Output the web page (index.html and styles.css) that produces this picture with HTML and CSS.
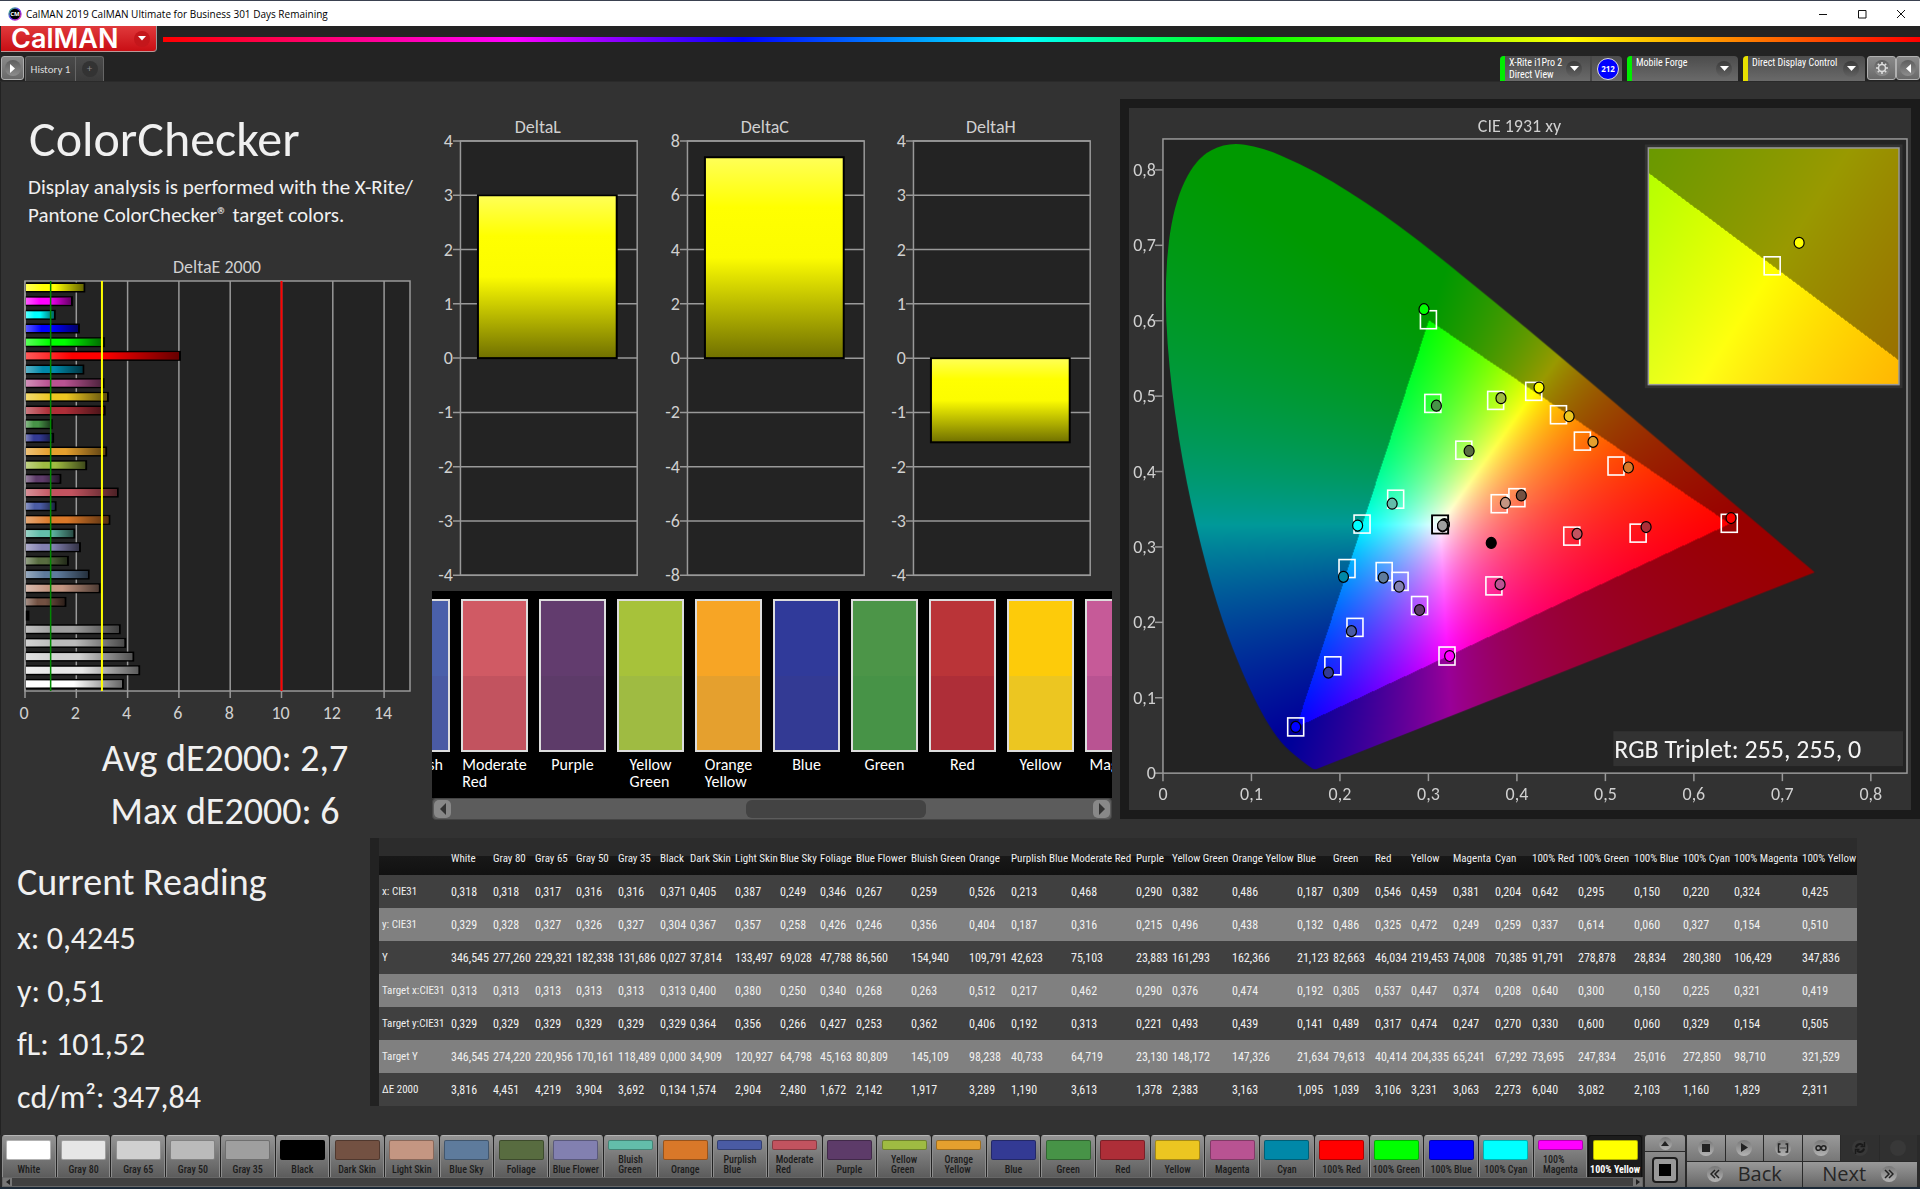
FILE: index.html
```html
<!DOCTYPE html>
<html lang="en">
<head>
<meta charset="utf-8">
<title>CalMAN 2019 CalMAN Ultimate for Business</title>
<link rel="stylesheet" href="styles.css">
</head>
<body>
<header class="titlebar">
  <svg class="app-icon" width="14" height="14" viewBox="0 0 14 14" aria-hidden="true">
    <defs><linearGradient id="ring" x1="0" y1="0" x2="1" y2="1"><stop offset="0" stop-color="#3c6"/><stop offset=".5" stop-color="#63f"/><stop offset="1" stop-color="#e3a"/></linearGradient></defs>
    <circle cx="7" cy="7" r="6" fill="#000" stroke="url(#ring)" stroke-width="1.4"/>
    <text x="7" y="9" text-anchor="middle" class="app-icon-text">CM</text>
  </svg>
  <span class="titlebar-text">CalMAN 2019 CalMAN Ultimate for Business 301 Days Remaining</span>
  <div class="window-buttons">
    <button aria-label="Minimize"><svg width="10" height="10"><path d="M1 5.500h8" stroke="#111"/></svg></button>
    <button aria-label="Maximize"><svg width="10" height="10"><path d="M1.500 1.500h7.500v7.500h-7.500z" fill="none" stroke="#111"/></svg></button>
    <button aria-label="Close"><svg width="10" height="10"><path d="M1 1l8 8M9 1l-8 8" stroke="#111"/></svg></button>
  </div>
</header>

<div class="brandbar">
  <button class="logo">CalMAN <span class="knob knob-red"><svg width="8" height="5"><path d="M0 0h8l-4 4.500z" fill="#fff"/></svg></span></button>
  <div class="spectrum"></div>
</div>

<nav class="tabbar">
  <button class="square-btn play-btn" aria-label="Expand"><span class="knob"><svg width="5" height="9"><path d="M0 0l5 4.500-5 4.500z" fill="#fff"/></svg></span></button>
  <button class="tab">History 1</button>
  <button class="tab tab-add" aria-label="Add tab"><span class="knob knob-dark">+</span></button>
  <div class="devices">
    <button class="device device-meter"><i class="strip strip-green"></i><span class="device-name">X-Rite i1Pro 2<br>Direct View</span><span class="knob knob-dark"><svg width="9" height="5"><path d="M0 0h9l-4.500 5z" fill="#fff"/></svg></span><span class="badge-cell"><span class="badge">212</span></span></button>
    <button class="device device-source"><i class="strip strip-green"></i><span class="device-name">Mobile Forge</span><span class="knob knob-dark"><svg width="9" height="5"><path d="M0 0h9l-4.500 5z" fill="#fff"/></svg></span></button>
    <button class="device device-display"><i class="strip strip-yellow"></i><span class="device-name">Direct Display Control</span><span class="knob knob-dark"><svg width="9" height="5"><path d="M0 0h9l-4.500 5z" fill="#fff"/></svg></span></button>
    <button class="square-btn gear-btn" aria-label="Settings"><span class="knob"><svg width="12" height="12" viewBox="0 0 12 12"><circle cx="6" cy="6" r="3.500" fill="none" stroke="#ddd" stroke-width="1.500"/><path d="M6 0v2M6 10v2M0 6h2M10 6h2M1.800 1.800l1.400 1.400M8.800 8.800l1.400 1.400M1.800 10.200l1.400-1.400M8.800 3.200l1.400-1.400" stroke="#ddd" stroke-width="1.600"/></svg></span></button>
    <button class="square-btn back-btn" aria-label="Collapse"><span class="knob"><svg width="5" height="9"><path d="M5 0l-5 4.500 5 4.500z" fill="#fff"/></svg></span></button>
  </div>
</nav>

<main class="workspace">
  <div class="charts">
    <section class="summary">
      <h1>ColorChecker</h1>
      <p class="intro">Display analysis is performed with the X-Rite/<br>Pantone ColorChecker® target colors.</p>
      <svg id="delta-e" class="chart" viewBox="0 250 432 482"></svg>
      <p class="stat">Avg dE2000: 2,7</p>
      <p class="stat">Max dE2000: 6</p>
    </section>
    <section class="deltas">
      <div id="delta-charts" class="delta-charts"></div>
      <div class="patches"><ul id="patch-list" class="patch-list"></ul></div>
      <div class="scrollbar">
        <button aria-label="Scroll left"><svg width="6" height="12"><path d="M6 0v12l-6-6z" fill="#333"/></svg></button>
        <div class="scroll-track"><div class="scroll-thumb"></div></div>
        <button aria-label="Scroll right"><svg width="6" height="12"><path d="M0 0v12l6-6z" fill="#333"/></svg></button>
      </div>
    </section>
    <section class="cie">
      <div class="cie-panel">
        <canvas id="cie-canvas" width="783" height="703"></canvas>
        <svg id="cie-chart" class="chart" viewBox="1128 108 783 703"></svg>
      </div>
    </section>
  </div>
  <div class="readings">
    <section class="current">
      <h2>Current Reading</h2>
      <p>x: 0,4245</p>
      <p>y: 0,51</p>
      <p>fL: 101,52</p>
      <p>cd/m²: 347,84</p>
    </section>
    <table id="data" class="data"></table>
  </div>
</main>

<footer class="footer">
  <div class="tiles-wrap">
    <div id="tiles" class="tiles"></div>
    <div class="mini-scroll">
      <button aria-label="Scroll left"><svg width="4" height="6"><path d="M4 0v6l-4-3z" fill="#222"/></svg></button>
      <button aria-label="Scroll right"><svg width="4" height="6"><path d="M0 0v6l4-3z" fill="#222"/></svg></button>
    </div>
  </div>
  <div class="pattern">
    <button class="pattern-up" aria-label="Pattern list"><span class="knob knob-light"><svg width="8" height="5"><path d="M0 5h8l-4-5z" fill="#222"/></svg></span></button>
    <button class="pattern-box" aria-label="Window pattern"><span class="pattern-frame"><i></i></span></button>
  </div>
  <div class="transport">
    <div class="transport-row">
      <button aria-label="Stop"><span class="knob knob-light"><svg width="8" height="8"><path d="M0 0h8v8h-8z" fill="#222"/></svg></span></button>
      <button aria-label="Play"><span class="knob knob-light"><svg width="8" height="9"><path d="M1 0l7 4.500-7 4.500z" fill="#222"/></svg></span></button>
      <button aria-label="Read series"><span class="knob knob-light"><svg width="12" height="10" fill="none" stroke="#222" stroke-width="1.500"><path d="M3.500 1h-2v8h2M8.500 1h2v8h-2M3.500 5h1M5.500 5h1M7.500 5h1"/></svg></span></button>
      <button aria-label="Read continuously"><span class="knob knob-light"><svg width="12" height="8" fill="none" stroke="#222" stroke-width="1.500"><circle cx="3.300" cy="4" r="2.300"/><circle cx="8.700" cy="4" r="2.300"/></svg></span></button>
      <button class="off" aria-label="Refresh"><span class="knob knob-off"><svg width="12" height="12" fill="none" stroke="#1a1a1a" stroke-width="2"><path d="M2 5.500a4 4 0 0 1 7-2M10 6.500a4 4 0 0 1-7 2"/><path d="M10.500 0v4.500h-4M1.500 12v-4.500h4" stroke-width="1.500"/></svg></span></button>
      <button class="off" aria-label="Options"><span class="knob knob-off"></span></button>
    </div>
    <div class="transport-row">
      <button class="nav-btn"><span class="knob knob-light"><svg width="10" height="10" fill="none" stroke="#222" stroke-width="1.500"><path d="M5 1l-4 4 4 4M9 1l-4 4 4 4"/></svg></span>Back</button>
      <button class="nav-btn">Next<span class="knob knob-light"><svg width="10" height="10" fill="none" stroke="#222" stroke-width="1.500"><path d="M1 1l4 4-4 4M5 1l4 4-4 4"/></svg></span></button>
    </div>
  </div>
</footer>
<script src="app.js"></script>
</body>
</html>
```
FILE: styles.css
```css
* { box-sizing: border-box; }
body {
  margin: 0;
  min-height: 100vh;
  display: flex;
  flex-direction: column;
  background: #323232;
  color: #f0f0f0;
  font-family: Carlito, Calibri, Lato, sans-serif;
  border-bottom: 2px solid #1c2a38;
}
button {
  margin: 0;
  padding: 0;
  border: 0;
  background: none;
  color: inherit;
  font: inherit;
}
h1, h2, p, ul { margin: 0; padding: 0; font-weight: 400; }
svg { flex: none; }

.titlebar {
  height: 26px;
  display: flex;
  align-items: center;
  padding: 0 0 0 8px;
  background: #fff;
  color: #000;
  border-top: 1px solid #3a4150;
  font-family: "Open Sans", sans-serif;
  font-size: 10px;
}
.app-icon-text { font: 700 6px "Open Sans", sans-serif; fill: #fff; }
.titlebar-text { flex: 1; margin-left: 4px; }
.window-buttons { display: flex; }
.window-buttons button { width: 39px; height: 24px; display: grid; place-items: center; }

.brandbar { display: flex; background: #232323; height: 28px; }
.logo {
  width: 156px;
  height: 26px;
  margin-left: 1px;
  display: flex;
  align-items: center;
  justify-content: space-between;
  padding: 0 6px 0 10px;
  border-right: 1px solid #999;
  border-bottom: 1px solid #b99;
  border-radius: 0 0 4px 0;
  background: linear-gradient(#e03a3c, #c90e14);
  color: #fff;
  font: 600 27px Inter, sans-serif;
  line-height: 24px;
}
.spectrum {
  flex: 1;
  height: 5px;
  margin: 11px 0 0 6px;
  background: linear-gradient(90deg, #f00, #f0f 20%, #00f 33%, #0ff 49%, #0f0 62%, #ff0 80%, #f00);
}
.knob {
  flex: none;
  width: 16px;
  height: 16px;
  display: grid;
  place-items: center;
  border-radius: 50%;
  background: linear-gradient(#5e5e5e, #8d8d8d);
}
.knob-red { background: #c4161b; }
.knob-dark { background: linear-gradient(#3a3a3a, #626262); }
.knob-light { background: linear-gradient(#777, #b4b4b4); }
.knob-off { background: #383838; }

.tabbar { display: flex; height: 28px; padding: 2px 0 0 1px; background: #232323; border-bottom: 1px solid #2a2a2a; }
.square-btn {
  height: 24px;
  display: grid;
  place-items: center;
  border: 1px solid #b0b0b0;
  border-radius: 3px;
  background: linear-gradient(#8a8a8a, #6a6a6a);
}
.play-btn { width: 23px; margin-right: 1px; }
.tab {
  width: 51px;
  background: linear-gradient(#4a4a4a, #3a3a3a);
  border: 1px solid #666;
  border-bottom: 0;
  border-radius: 3px 0 0 0;
  color: #ddd;
  font-size: 11px;
}
.tab-add { width: 28px; display: grid; place-items: center; border-radius: 0 3px 0 0; border-left: 0; color: #888; }
.tab-add .knob { line-height: 16px; background: #333; }
.devices { margin-left: auto; display: flex; }
.device {
  display: flex;
  align-items: center;
  gap: 4px;
  border-radius: 4px 4px 0 0;
  background: linear-gradient(#4c4c4c, #6a6a6a);
  color: #fff;
  font-family: "Roboto Condensed", Roboto, sans-serif;
  font-size: 10px;
  line-height: 12px;
  text-align: left;
  overflow: hidden;
  padding-right: 6px;
  margin-right: 5px;
}
.device-meter { width: 122px; padding-right: 0; }
.device-source { width: 111px; }
.device-display { width: 122px; margin-right: 2px; }
.strip { align-self: stretch; width: 5px; flex: none; }
.strip-green { background: #0e0; }
.strip-yellow { background: #e8e000; }
.device-name { flex: 1; min-width: 0; align-self: flex-start; white-space: nowrap; padding-top: 1px; }
.badge-cell { align-self: stretch; display: flex; align-items: center; margin-left: 4px; padding: 0 3px 0 5px; border-left: 2px solid #484848; }
.badge {
  width: 22px;
  height: 22px;
  border: 1px solid #ddd;
  border-radius: 50%;
  background: #00f;
  font: 700 8px "Open Sans", sans-serif;
  line-height: 20px;
  text-align: center;
}
.gear-btn { width: 29px; }
.back-btn { width: 24px; }

.workspace { flex: 1; box-shadow: inset 1px 0 #222; }
.charts { display: grid; grid-template-columns: 432fr 688fr 800fr; align-items: start; }
.charts > * { min-width: 0; }
.chart { display: block; width: 100%; height: auto; }
.chart text { fill: #d0d0d0; font-size: 18px; }
h1 { padding: 27px 0 0 29px; font-size: 50px; line-height: 60px; }
.intro { padding: 4px 0 21px 28px; font-size: 21px; line-height: 28px; white-space: nowrap; }
.stat { padding-left: 18px; font-size: 38px; line-height: 53px; text-align: center; }

.deltas { padding: 28px 8px 0 0; }
.delta-charts { display: grid; grid-template-columns: repeat(3, 1fr); }
.patches { height: 207px; padding-top: 8px; overflow: hidden; background: #000; margin-top: 2px; }
.patch-list { display: flex; gap: 11px; margin-left: -49px; list-style: none; }
.patch-list li { flex: none; width: 67px; display: flex; flex-direction: column; align-items: center; }
.patch { width: 67px; height: 153px; border: 2px solid #ddd; display: grid; grid-template-rows: 1fr 1fr; }
.patch-label { margin-top: 4px; font-size: 16px; line-height: 17px; color: #fff; white-space: pre; }
.scrollbar { display: flex; height: 22px; border: 1px solid #444; background: #5c5c5c; border-radius: 4px; }
.scrollbar button { width: 17px; margin: 1px; display: grid; place-items: center; border-radius: 5px; background: #888; }
.scroll-track { flex: 1; padding: 1px 0; }
.scroll-thumb { width: 28%; height: 18px; margin-left: 46%; border-radius: 6px; background: #434343; }

.cie { padding: 9px; margin-top: 17px; background: #1b1b1b; }
.cie-panel { display: grid; background: #323232; }
.cie-panel > * { grid-area: 1 / 1; width: 100%; }
.chart .triplet { fill: #f4f4f4; font-size: 26px; }

.readings { display: grid; grid-template-columns: 370fr 1486fr 64fr; align-items: start; }
.readings > * { min-width: 0; }
.current { padding: 18px 0 0 17px; font-size: 32px; line-height: 53px; }
.current h2 { font-size: 38px; padding-bottom: 3px; }
.data { width: 100%; table-layout: fixed; border-collapse: separate; border-spacing: 0; border-left: 9px solid #222; font-family: "Roboto Condensed", Roboto, sans-serif; font-size: 12px; }
.data th, .data td { padding: 0 0 0 3px; text-align: left; font-weight: 400; white-space: nowrap; }
.data thead tr { height: 37px; background: linear-gradient(#2c2c2c 50%, #181818 50%, #111); }
.data th { font-size: 11px; }
.data thead th { padding-top: 4px; }
.data tbody tr { height: 33px; background: #404040; }
.data tbody tr:nth-child(even) { background: #808080; }

.footer { display: flex; height: 52px; background: #2a2a2a; }
.tiles-wrap { flex: 1; padding-left: 2px; }
.tiles { display: grid; grid-template-columns: repeat(30, 1fr); height: 42px; background: #222; }
.tile {
  display: flex;
  flex-direction: column;
  align-items: center;
  justify-content: space-between;
  margin-right: 1px;
  padding-top: 4px;
  border: 1px solid #8d8d8d;
  border-top-color: #b5b5b5;
  border-radius: 3px 3px 0 0;
  border-bottom: 0;
  background: linear-gradient(#949494, #5c5c5c);
  color: #1c1c1c;
  font: 500 10px "Roboto Condensed", Roboto, sans-serif;
  line-height: 10px;
  text-align: left;
  white-space: pre;
}
.tile i { width: 45px; height: 20px; border-radius: 2px; border: 1px solid rgba(0, 0, 0, .3); flex: none; }
.tile.two i { height: 10px; }
.tile span { padding-bottom: 2px; }
.tile.active { background: #1c1c1c; border-color: #111; color: #fff; font-weight: 700; }
.mini-scroll { display: flex; justify-content: space-between; height: 10px; background: #404040; border: 1px solid #666; }
.mini-scroll button { width: 9px; height: 8px; display: grid; place-items: center; background: #777; }
.pattern { width: 40px; margin: 0 2px; display: flex; flex-direction: column; gap: 1px; }
.pattern button { display: grid; place-items: center; background: linear-gradient(#999, #808080); border-radius: 3px 3px 0 0; }
.pattern-up { height: 16px; }
.pattern-up .knob { width: 13px; height: 13px; }
.pattern .pattern-box { flex: 1; border-radius: 0; background: linear-gradient(#8a8a8a, #666); }
.pattern-frame { width: 26px; height: 26px; padding: 5px; border: 2px solid #1c1c1c; border-radius: 4px; background: #999; }
.pattern-frame i { display: block; height: 12px; background: #000; }
.transport { width: 230px; margin-right: 3px; display: flex; flex-direction: column; gap: 1px; }
.transport-row { flex: 1; display: flex; gap: 1px; }
.transport-row button { flex: 1; display: flex; align-items: center; justify-content: center; background: linear-gradient(#9a9a9a, #777); }
.transport-row .off { background: #303030; }
.transport-row .nav-btn { gap: 15px; background: linear-gradient(#999, #666); color: #262626; font: 400 20px "Open Sans", sans-serif; line-height: 24px; }
```
FILE: app.js
```js
// name | patch colour | reference colour | x | y | Y | target x | target y | target Y | dE | column width
const DATA = `White|#ffffff|#ffffff|0,318|0,329|346,545|0,313|0,329|346,545|3,816|42
Gray 80|#e6e6e6|#e6e6e6|0,318|0,328|277,260|0,313|0,329|274,220|4,451|42
Gray 65|#d0d0d0|#d0d0d0|0,317|0,327|229,321|0,313|0,329|220,956|4,219|41
Gray 50|#bababa|#bababa|0,316|0,326|182,338|0,313|0,329|170,161|3,904|42
Gray 35|#9f9f9f|#9f9f9f|0,316|0,327|131,686|0,313|0,329|118,489|3,692|42
Black|#000000|#000000|0,371|0,304|0,027|0,313|0,329|0,000|0,134|30
Dark Skin|#735142|#735142|0,405|0,367|37,814|0,400|0,364|34,909|1,574|45
Light Skin|#c49682|#c49682|0,387|0,357|133,497|0,380|0,356|120,927|2,904|45
Blue Sky|#5e7b9c|#5e7b9c|0,249|0,258|69,028|0,250|0,266|64,798|2,480|40
Foliage|#586c40|#586c40|0,346|0,426|47,788|0,340|0,427|45,163|1,672|36
Blue Flower|#8280b0|#8280b0|0,267|0,246|86,560|0,268|0,253|80,809|2,142|55
Bluish Green|#63bdaa|#63bdaa|0,259|0,356|154,940|0,263|0,362|145,109|1,917|58
Orange|#d97829|#d97829|0,526|0,404|109,791|0,512|0,406|98,238|3,289|42
Purplish Blue|#4a5ba4|#4a60aa|0,213|0,187|42,623|0,217|0,192|40,733|1,190|60
Moderate Red|#c2535f|#d05a64|0,468|0,316|75,103|0,462|0,313|64,719|3,613|65
Purple|#5d3b69|#623c6e|0,290|0,215|23,883|0,290|0,221|23,130|1,378|36
Yellow Green|#9fbb42|#a7c23a|0,382|0,496|161,293|0,376|0,493|148,172|2,383|60
Orange Yellow|#e5a02e|#f7a525|0,486|0,438|162,366|0,474|0,439|147,326|3,163|65
Blue|#333a94|#303a9a|0,187|0,132|21,123|0,192|0,141|21,634|1,095|36
Green|#479347|#4c9548|0,309|0,486|82,663|0,305|0,489|79,613|1,039|42
Red|#ae2e38|#ba3438|0,546|0,325|46,034|0,537|0,317|40,414|3,106|36
Yellow|#ecc621|#fdcb0a|0,459|0,472|219,453|0,447|0,474|204,335|3,231|42
Magenta|#b95392|#c65a98|0,381|0,249|74,008|0,374|0,247|65,241|3,063|42
Cyan|#0088a8|#0088a8|0,204|0,259|70,385|0,208|0,270|67,292|2,273|37
100% Red|#ff0000|#ff0000|0,642|0,337|91,791|0,640|0,330|73,695|6,040|46
100% Green|#00ff00|#00ff00|0,295|0,614|278,878|0,300|0,600|247,834|3,082|56
100% Blue|#0000ff|#0000ff|0,150|0,060|28,834|0,150|0,060|25,016|2,103|49
100% Cyan|#00ffff|#00ffff|0,220|0,327|280,380|0,225|0,329|272,850|1,160|51
100% Magenta|#ff00ff|#ff00ff|0,324|0,154|106,429|0,321|0,154|98,710|1,829|68
100% Yellow|#ffff00|#ffff00|0,425|0,510|347,836|0,419|0,505|321,529|2,311|58`
  .split('\n').map(line => line.split('|'));
const num = s => parseFloat(s.replace(',', '.'));
const byId = id => document.getElementById(id);
const line = (x1, y1, x2, y2, c = '#999', w = 1.5) => `<line x1="${x1}" y1="${y1}" x2="${x2}" y2="${y2}" stroke="${c}" stroke-width="${w}"/>`;
const rect = (x, y, w, h, rest) => `<rect x="${x}" y="${y}" width="${w}" height="${h}" ${rest}/>`;
const text = (x, y, s, anchor = 'middle', cls = '') => `<text x="${x}" y="${y}" text-anchor="${anchor}" class="${cls}">${s}</text>`;

// Delta E bar chart
(function () {
  const X = v => 25 + v * 25.65;
  let s = '<defs><linearGradient id="shade"><stop offset="0" stop-color="#fff" stop-opacity=".35"/><stop offset=".3" stop-color="#fff" stop-opacity="0"/><stop offset=".5" stop-color="#000" stop-opacity="0"/><stop offset="1" stop-color="#000" stop-opacity=".6"/></linearGradient></defs>';
  s += rect(25, 281, 385, 410, 'fill="#232323"');
  for (let v = 0; v < 15; v += 2) s += line(X(v), 281, X(v), 698) + text(X(v) - 1, 719, v);
  DATA.slice().reverse().forEach((d, i) => {
    const y = 282.5 + i * 13.67, w = num(d[9]) * 25.65 - 1;
    s += rect(25, y, w + 2, 10, 'fill="#000"');
    if (w > 4) s += rect(26, y + 1.5, w - 1, 7, `fill="${d[1]}"`) + rect(26, y + 1.5, w - 1, 7, 'fill="url(#shade)"');
  });
  s += rect(25, 281, 385, 410, 'fill="none" stroke="#999" stroke-width="1.5"');
  s += line(X(1), 281, X(1), 691, '#080', 1.5) + line(X(3), 281, X(3), 691, '#ff0', 2) + line(X(10), 281, X(10), 691, '#f00', 2);
  s += text(217, 273, 'DeltaE 2000');
  byId('delta-e').innerHTML = s;
})();

// Delta L / C / H charts
byId('delta-charts').innerHTML = [['DeltaL', 1, 3], ['DeltaC', 2, 7.4], ['DeltaH', 1, -1.55]].map(([name, step, value], n) => {
  let s = `<defs><linearGradient id="bar${n}" x1="0" y1="0" x2="0" y2="1"><stop offset="0" stop-color="#ffff58"/><stop offset=".25" stop-color="#ff0"/><stop offset=".5" stop-color="#fcfc00"/><stop offset="1" stop-color="#707000"/></linearGradient></defs>`;
  s += rect(28.5, 31, 177, 435, 'fill="#232323"') + text(106, 23, name);
  for (let i = 0; i <= 8; i++) {
    const y = 31 + i * 54.375;
    s += line(21, y, 205.5, y) + text(21, y + 6, (4 - i) * step, 'end');
  }
  const h = Math.abs(value / step) * 54.375, top = value > 0 ? 248.5 - h : 248.5;
  s += rect(46, top, 139, h, `fill="url(#bar${n})" stroke="#000" stroke-width="2"`);
  s += rect(28.5, 31, 177, 435, 'fill="none" stroke="#999" stroke-width="1.5"');
  return `<svg class="chart" viewBox="0 0 227 480">${s}</svg>`;
}).join('');

// Patch strip
const twoLine = n => n.replace(/^(Bluish|Purplish|Moderate|Yellow|Orange) /, '$1\n');
byId('patch-list').innerHTML = DATA.slice(13, 23).map(d =>
  `<li><div class="patch"><i style="background:${d[2]}"></i><i style="background:${d[1]}"></i></div><span class="patch-label">${twoLine(d[0])}</span></li>`).join('');

// Bottom tiles
byId('tiles').innerHTML = DATA.map((d, i) => {
  const name = twoLine(d[0]).replace('100% Magenta', '100%\nMagenta');
  const cls = 'tile' + (name.includes('\n') ? ' two' : '') + (i === 29 ? ' active' : '');
  return `<button class="${cls}"><i style="background:${d[1]}"></i><span>${name}</span></button>`;
}).join('');

// Data table
byId('data').innerHTML = '<colgroup><col style="width:69px">' + DATA.map(d => `<col style="width:${d[10]}px">`).join('') + '</colgroup>' +
  '<thead><tr><td></td>' + DATA.map(d => `<th scope="col">${d[0]}</th>`).join('') + '</tr></thead><tbody>' +
  ['x: CIE31', 'y: CIE31', 'Y', 'Target x:CIE31', 'Target y:CIE31', 'Target Y', 'ΔE 2000'].map((h, r) =>
    `<tr><th scope="row">${h}</th>` + DATA.map(d => `<td>${d[3 + r]}</td>`).join('') + '</tr>').join('') + '</tbody>';

// CIE 1931 diagram: coloured area on the canvas, axes and markers in the SVG above it
(function () {
  const OX = 1162, OY = 773, SX = 886, SY = 755, W = 783, H = 703;
  const locus = [.1741, .005, .1714, .0051, .1689, .0069, .1644, .0109, .1566, .0177, .144, .0297, .1355, .0399, .1241, .0578, .1096, .0868, .0913, .1327, .0687, .2007, .0454, .295, .0235, .4127, .0082, .5384, .0039, .6548, .0139, .7502, .0389, .812, .0743, .8338, .1142, .8262, .1547, .8059, .1929, .7816, .2296, .7543, .2658, .7243, .3016, .6923, .3731, .6245, .4441, .5547, .5125, .4866, .5752, .4242, .627, .3725, .6658, .334, .6915, .3083, .719, .2809, .7347, .2653];
  const color = (x, y) => {
    const X = x / y, Z = (1 - x - y) / y;
    const lin = [3.2406 * X - 1.5372 - .4986 * Z, -.9689 * X + 1.8758 + .0415 * Z, .0557 * X - .204 + 1.057 * Z];
    const inside = Math.min(...lin) >= 0, m = Math.max(...lin);
    return lin.map(v => 255 * (inside ? 1 : .6) * Math.max(0, v) / m);
  };
  const shade = (w, h, toXY) => {
    const c = document.createElement('canvas');
    c.width = w; c.height = h;
    const g = c.getContext('2d'), img = g.createImageData(w, h);
    for (let j = 0; j < h; j++) for (let i = 0; i < w; i++) {
      const [x, y] = toXY(i, j);
      if (y <= 0) continue;
      const rgb = color(x, y), k = (j * w + i) * 4;
      img.data[k] = rgb[0]; img.data[k + 1] = rgb[1]; img.data[k + 2] = rgb[2]; img.data[k + 3] = 255;
    }
    g.putImageData(img, 0, 0);
    return c;
  };
  const g = byId('cie-canvas').getContext('2d');
  g.fillStyle = '#232323';
  g.fillRect(34, 31, 745, 635);
  const px = x => OX - 1128 + x * SX, py = y => OY - 108 - y * SY;
  const lx = x => 32 + x * 891, ly = y => 666 - y * 758;
  g.save();
  g.beginPath();
  g.moveTo(lx(locus[0]), ly(locus[1]));
  for (let i = 2; i < locus.length - 2; i += 2) {
    const x = lx(locus[i]), y = ly(locus[i + 1]);
    g.quadraticCurveTo(x, y, (x + lx(locus[i + 2])) / 2, (y + ly(locus[i + 3])) / 2);
  }
  g.lineTo(lx(.7347), ly(.2653));
  g.closePath();
  g.clip();
  g.drawImage(shade(W, H, (i, j) => [(i - px(0)) / SX, (py(0) - j) / SY]), 0, 0);
  g.restore();
  g.drawImage(shade(251, 237, (i, j) => [.4193 + (i / 251 - .5) * .05, .5053 - (j / 237 - .5) * .05]), 520, 40);

  let s = rect(1162, 139, 745, 635, 'fill="none" stroke="#999" stroke-width="1.5"') + text(1519, 132, 'CIE 1931 xy');
  for (let i = 0; i <= 8; i++) {
    const label = i ? '0,' + i : '0', x = 1162 + i * SX / 10, y = 774 - i * SY / 10;
    s += line(x, 774, x, 782) + text(x, 801, label) + line(1154, y, 1162, y) + text(1155, y + 6, label, 'end');
  }
  const square = (x, y) => rect(x - 8, y - 9, 16, 18, 'fill="none" stroke="#fff" stroke-width="1.6"');
  const dot = (x, y, c) => `<ellipse cx="${x}" cy="${y}" rx="5" ry="5.500" fill="${c}" stroke="#000" stroke-width="1.2"/>`;
  DATA.slice(6).forEach(d => { s += square(OX + num(d[6]) * SX, OY - num(d[7]) * SY); });
  s += rect(1431.5, 516, 16, 18, 'fill="none" stroke="#000" stroke-width="2"') + rect(1433, 517.5, 13, 15, 'fill="none" stroke="#fff" stroke-width="1"');
  DATA.forEach(d => { s += dot(OX + num(d[3]) * SX, OY - num(d[4]) * SY, d[1]); });
  s += rect(1646, 146, 255, 241, 'fill="none" stroke="#323232" stroke-width="3"') + rect(1648, 148, 251, 237, 'fill="none" stroke="#999" stroke-width="1.5"');
  s += square(1772, 266) + dot(1799, 243, '#ff0');
  s += rect(1613, 732, 290, 35, 'fill="#323232"') + text(1614, 759, 'RGB Triplet: 255, 255, 0', 'start', 'triplet');
  byId('cie-chart').innerHTML = s;
})();
```
